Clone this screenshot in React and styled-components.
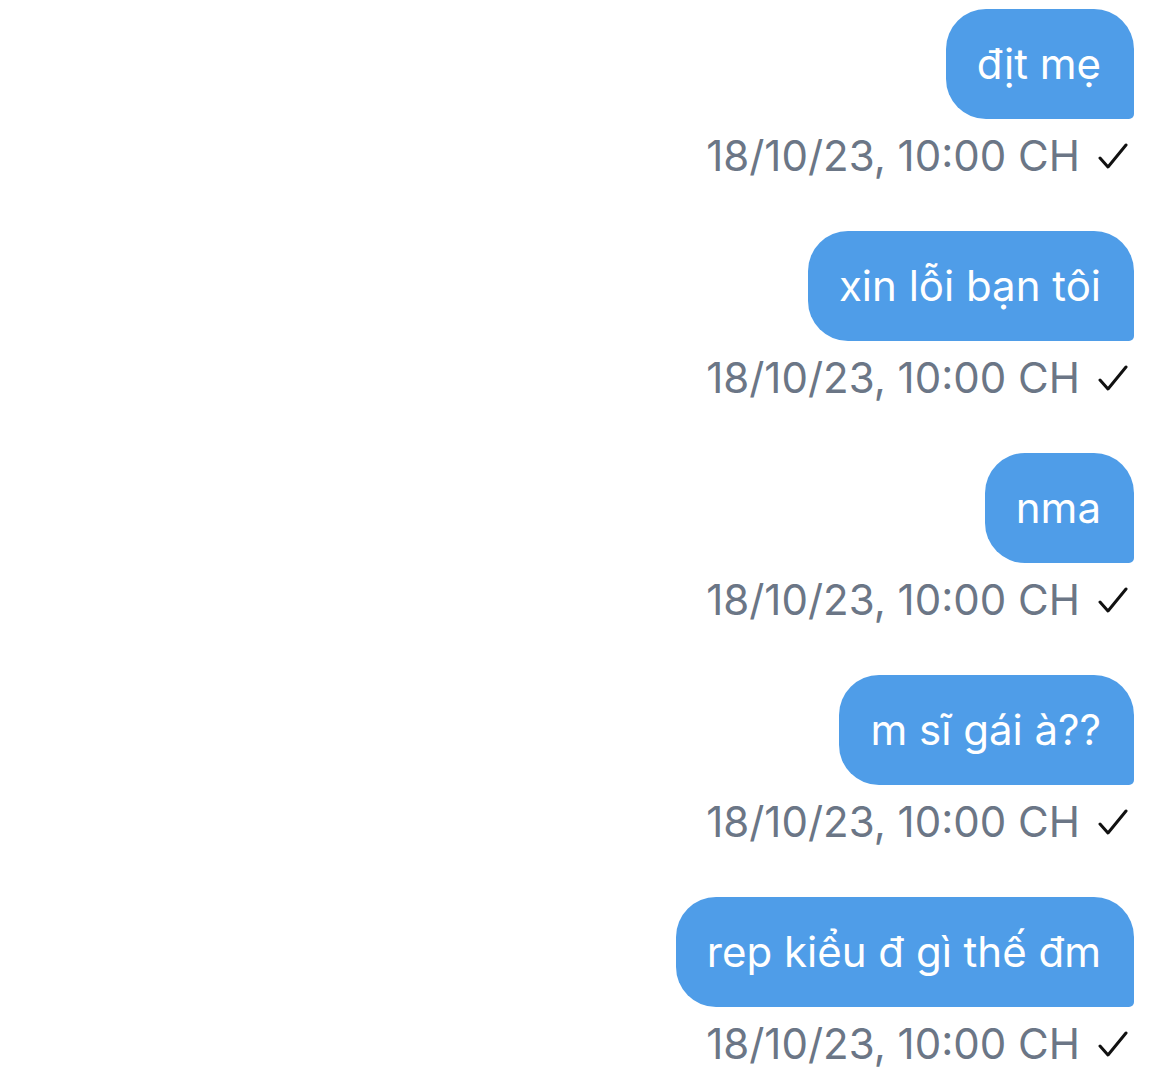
import React from "react";
import styled, { createGlobalStyle } from "styled-components";

const GlobalStyle = createGlobalStyle`
  body {
    margin: 0;
    background: #ffffff;
    font-family: Inter, "Noto Sans", sans-serif;
  }
`;

const messages = [
  "địt mẹ",
  "xin lỗi bạn tôi",
  "nma",
  "m sĩ gái à??",
  "rep kiểu đ gì thế đm",
];

const Thread = styled.div`
  display: flex;
  flex-direction: column;
  align-items: flex-end;
  gap: 52px;
  padding: 9px 36px 0 0;
`;

const Message = styled.div`
  display: flex;
  flex-direction: column;
  align-items: flex-end;
  gap: 14px;
`;

const Bubble = styled.div`
  background: #4f9de8;
  color: #ffffff;
  font-size: 42px;
  line-height: 54px;
  padding: 28px 33px 28px 31px;
  border-radius: 40px 40px 5px 40px;
  white-space: nowrap;
`;

const Meta = styled.div`
  display: flex;
  align-items: center;
  gap: 18px;
  padding-right: 6px;
  color: #6b7686;
  font-size: 42px;
  line-height: 46px;
`;

const Check = () => (
  <svg width="30" height="26" viewBox="0 0 30 26" fill="none">
    <path
      d="M2 15 L10 24 L28 2"
      stroke="#111"
      strokeWidth="3"
      strokeLinecap="round"
      strokeLinejoin="round"
    />
  </svg>
);

export default function App() {
  return (
    <>
      <GlobalStyle />
      <Thread>
        {messages.map((text, i) => (
          <Message key={i}>
            <Bubble>{text}</Bubble>
            <Meta>
              18/10/23, 10:00 CH
              <Check />
            </Meta>
          </Message>
        ))}
      </Thread>
    </>
  );
}
